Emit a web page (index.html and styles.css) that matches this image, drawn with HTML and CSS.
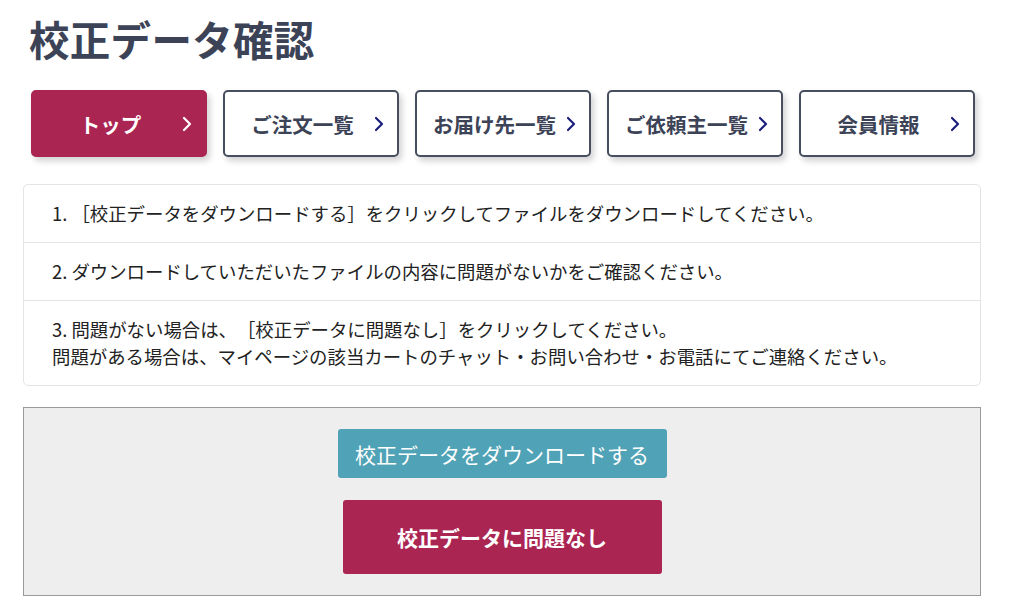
FILE: index.html
```html
<!DOCTYPE html>
<html lang="ja">
<head>
<meta charset="utf-8">
<title>校正データ確認</title>
<link rel="stylesheet" href="styles.css">
</head>
<body>
<div class="page">
  <h1 class="title">校正データ確認</h1>
  <nav class="nav">
    <a class="nav-btn nav-btn--active" href="#"><span class="nav-label">トップ</span><svg class="chev" viewBox="0 0 10 18" width="10" height="18"><polyline points="2,3 8,9 2,15" fill="none" stroke="currentColor" stroke-width="2.2" stroke-linecap="round" stroke-linejoin="round"/></svg></a>
    <a class="nav-btn" href="#"><span class="nav-label">ご注文一覧</span><svg class="chev" viewBox="0 0 10 18" width="10" height="18"><polyline points="2,3 8,9 2,15" fill="none" stroke="currentColor" stroke-width="2.2" stroke-linecap="round" stroke-linejoin="round"/></svg></a>
    <a class="nav-btn" href="#"><span class="nav-label">お届け先一覧</span><svg class="chev" viewBox="0 0 10 18" width="10" height="18"><polyline points="2,3 8,9 2,15" fill="none" stroke="currentColor" stroke-width="2.2" stroke-linecap="round" stroke-linejoin="round"/></svg></a>
    <a class="nav-btn" href="#"><span class="nav-label">ご依頼主一覧</span><svg class="chev" viewBox="0 0 10 18" width="10" height="18"><polyline points="2,3 8,9 2,15" fill="none" stroke="currentColor" stroke-width="2.2" stroke-linecap="round" stroke-linejoin="round"/></svg></a>
    <a class="nav-btn" href="#"><span class="nav-label">会員情報</span><svg class="chev" viewBox="0 0 10 18" width="10" height="18"><polyline points="2,3 8,9 2,15" fill="none" stroke="currentColor" stroke-width="2.2" stroke-linecap="round" stroke-linejoin="round"/></svg></a>
  </nav>

  <ul class="steps">
    <li class="step">1. ［校正データをダウンロードする］をクリックしてファイルをダウンロードしてください。</li>
    <li class="step">2. ダウンロードしていただいたファイルの内容に問題がないかをご確認ください。</li>
    <li class="step">3. 問題がない場合は、［校正データに問題なし］をクリックしてください。<br>問題がある場合は、マイページの該当カートのチャット・お問い合わせ・お電話にてご連絡ください。</li>
  </ul>

  <div class="actions">
    <button class="btn btn-download" type="button">校正データをダウンロードする</button>
    <button class="btn btn-ok" type="button">校正データに問題なし</button>
  </div>
</div>
</body>
</html>
```

FILE: styles.css
```css
* { box-sizing: border-box; }

html, body {
  margin: 0;
  padding: 0;
  background: #ffffff;
}

body {
  font-family: "Noto Sans CJK JP", "Noto Sans", sans-serif;
  color: #222222;
  text-spacing-trim: space-all;
}

.page {
  width: 958px;
  margin-left: 23px;
  padding-top: 15px;
}

.title {
  margin: 0 0 0 6px;
  font-size: 40.5px;
  line-height: 48px;
  font-weight: 700;
  color: #3c4357;
  letter-spacing: 0.3px;
}

.nav {
  display: flex;
  gap: 16px;
  margin: 27px 8px 0 8px;
}

.nav-btn {
  flex: 0 0 176px;
  height: 67px;
  display: flex;
  align-items: center;
  padding: 0 13px 0 10px;
  border: 2px solid #474e5f;
  border-radius: 5px;
  background: #ffffff;
  color: #3c4357;
  text-decoration: none;
  box-shadow: 3px 4px 6px rgba(0, 0, 0, 0.18);
}

.nav-btn .chev {
  color: #1b1f7c;
  flex: 0 0 auto;
  margin-left: 4px;
}

.nav-label {
  flex: 1;
  text-align: center;
  font-size: 20.5px;
  font-weight: 700;
  white-space: nowrap;
}

.nav-btn--active {
  background: #ab2553;
  border-color: #ab2553;
  color: #ffffff;
}

.nav-btn--active .chev {
  color: #ffffff;
}

.steps {
  list-style: none;
  margin: 27px 0 0 0;
  padding: 0;
  border: 1px solid #e4e4e4;
  border-radius: 5px;
}

.step {
  padding: 15px 28px;
  font-size: 18.4px;
  line-height: 27px;
  color: #222222;
  border-top: 1px solid #e4e4e4;
}

.step:first-child {
  border-top: none;
}

.actions {
  margin-top: 21px;
  display: flex;
  flex-direction: column;
  align-items: center;
  gap: 22px;
  padding: 21px 0;
  background: #eeeeee;
  border: 1px solid #9a9a9a;
}

.btn {
  border: none;
  border-radius: 3px;
  color: #ffffff;
  font-family: "Noto Sans CJK JP", "Noto Sans", sans-serif;
  font-size: 21px;
  cursor: pointer;
  padding: 0;
  text-spacing-trim: space-all;
}

.btn-download {
  width: 329px;
  height: 49px;
  background: #50a2b6;
  font-weight: 400;
}

.btn-ok {
  width: 319px;
  height: 74px;
  background: #ab2553;
  font-weight: 700;
}
```
